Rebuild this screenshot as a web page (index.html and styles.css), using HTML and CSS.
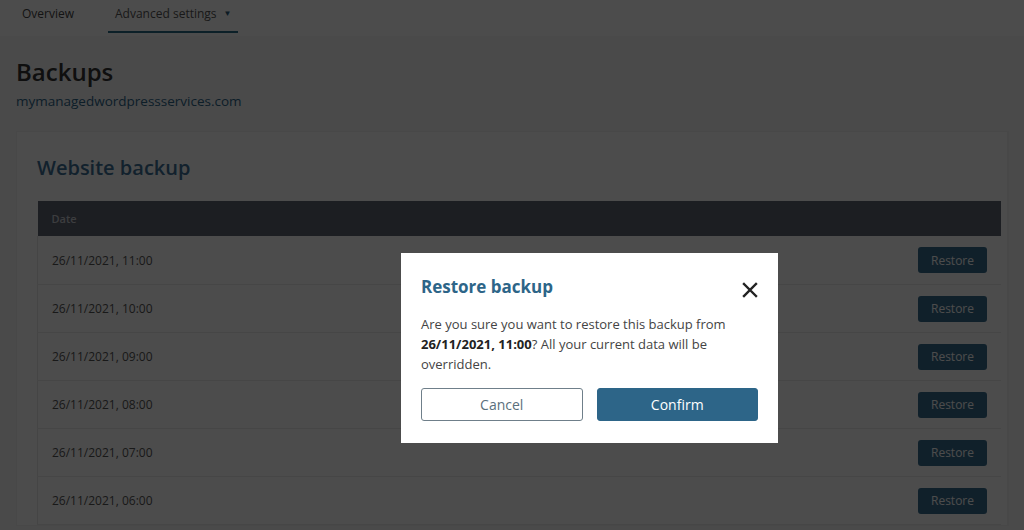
FILE: index.html
```html
<!DOCTYPE html>
<html lang="en">
<head>
    <meta charset="UTF-8">
    <title>Backups</title>
    <link rel="stylesheet" href="styles.css">
</head>
<body>
<nav class="tabs">
    <a class="tab">Overview</a>
    <a class="tab active">Advanced settings <span class="caret">&#9660;</span></a>
</nav>

<main class="content">
    <h1 class="page-title">Backups</h1>
    <div class="domain">mymanagedwordpressservices.com</div>

    <section class="card">
        <h2 class="card-title">Website backup</h2>
        <table class="backups">
            <thead>
            <tr><th colspan="2">Date</th></tr>
            </thead>
            <tbody>
            <tr><td>26/11/2021, 11:00</td><td class="action"><button class="btn-restore">Restore</button></td></tr>
            <tr><td>26/11/2021, 10:00</td><td class="action"><button class="btn-restore">Restore</button></td></tr>
            <tr><td>26/11/2021, 09:00</td><td class="action"><button class="btn-restore">Restore</button></td></tr>
            <tr><td>26/11/2021, 08:00</td><td class="action"><button class="btn-restore">Restore</button></td></tr>
            <tr><td>26/11/2021, 07:00</td><td class="action"><button class="btn-restore">Restore</button></td></tr>
            <tr><td>26/11/2021, 06:00</td><td class="action"><button class="btn-restore">Restore</button></td></tr>
            </tbody>
        </table>
    </section>
</main>

<div class="overlay">
    <div class="modal">
        <div class="modal-head">
            <h3>Restore backup</h3>
            <button class="close" aria-label="Close">
                <svg width="16" height="16" viewBox="0 0 16 16"><path d="M2 2 L14 14 M14 2 L2 14" stroke="#222" stroke-width="2.4" stroke-linecap="square"/></svg>
            </button>
        </div>
        <p>Are you sure you want to restore this backup from <b>26/11/2021, 11:00</b>? All your current data will be overridden.</p>
        <div class="modal-actions">
            <button class="btn-cancel">Cancel</button>
            <button class="btn-confirm">Confirm</button>
        </div>
    </div>
</div>
</body>
</html>
```

FILE: styles.css
```css
body {
    font-family: "Open Sans", Arial, sans-serif;
    margin: 0;
    padding: 0;
    background-color: #f8f8f8;
    color: #555;
}

.tabs {
    display: flex;
    height: 36px;
    padding-left: 15px;
    gap: 27px;
    background-color: #fff;
}

.tab {
    display: flex;
    align-items: flex-start;
    padding: 5px 7px 0;
    font-size: 12px;
    color: #444;
    border-bottom: 2px solid transparent;
    height: 26px;
}

.tab.active {
    border-bottom-color: #2a6c85;
    color: #555;
}

.caret {
    font-size: 8px;
    margin-left: 7px;
    margin-top: 2px;
    color: #2d5c7a;
}

.content {
    padding: 0 16px;
}

.page-title {
    font-size: 24px;
    font-weight: 600;
    color: #333;
    margin: 20px 0 0;
    line-height: 32px;
}

.domain {
    font-size: 13.5px;
    color: #2d6588;
    margin-top: 3px;
    line-height: 20px;
}

.card {
    margin-top: 20px;
    width: 964px;
    padding: 15px 6px 0 20px;
    background-color: #fff;
    border: 1px solid #f0f0f0;
    border-right-width: 2px;
}

.card-title {
    font-size: 20px;
    font-weight: 600;
    color: #3d6f96;
    margin: 7px 0 19px;
    line-height: 28px;
}

.backups {
    width: 964px;
    border-collapse: collapse;
    font-size: 12px;
}

.backups th {
    background-color: #5e6472;
    color: #c8ccd3;
    text-align: left;
    font-size: 11px;
    font-weight: 600;
    height: 35px;
    padding: 0 14px;
}

.backups td {
    box-sizing: border-box;
    height: 48px;
    padding: 1px 14px 0;
    border-bottom: 1px solid #ececec;
    color: #555;
}

.backups tbody tr td:first-child {
    border-left: 1px solid #e8e8e8;
}

.backups td.action {
    text-align: right;
}

.btn-restore {
    font-family: inherit;
    font-size: 12px;
    width: 69px;
    height: 26px;
    padding: 0;
    border: none;
    border-radius: 3px;
    background-color: #2d6588;
    color: #fff;
    opacity: 0.95;
}

.overlay {
    position: fixed;
    inset: 0;
    background-color: rgba(0, 0, 0, 0.7);
    padding: 253px 0 0 401px;
}

.modal {
    width: 337px;
    background-color: #fff;
    padding: 22px 20px 22px;
    color: #444;
}

.modal-head {
    display: flex;
    justify-content: space-between;
    align-items: center;
}

.modal-head h3 {
    margin: 0;
    font-size: 17px;
    font-weight: 700;
    color: #2d6588;
    line-height: 24px;
}

.close {
    border: none;
    background: none;
    padding: 0;
    margin: 5px 0 0;
    width: 16px;
    height: 16px;
}

.modal p {
    font-size: 13px;
    line-height: 20px;
    margin: 15px 0 14px;
}

.modal p b {
    color: #222;
}

.modal-actions {
    display: flex;
    gap: 14px;
}

.modal-actions button {
    flex: 1;
    height: 33px;
    font-family: inherit;
    font-size: 14px;
    border-radius: 3px;
}

.btn-cancel {
    background-color: #fff;
    border: 1px solid #6f7f8a;
    color: #5a6f7c;
}

.btn-confirm {
    background-color: #2d6588;
    border: 1px solid #2d6588;
    color: #fff;
}
```
